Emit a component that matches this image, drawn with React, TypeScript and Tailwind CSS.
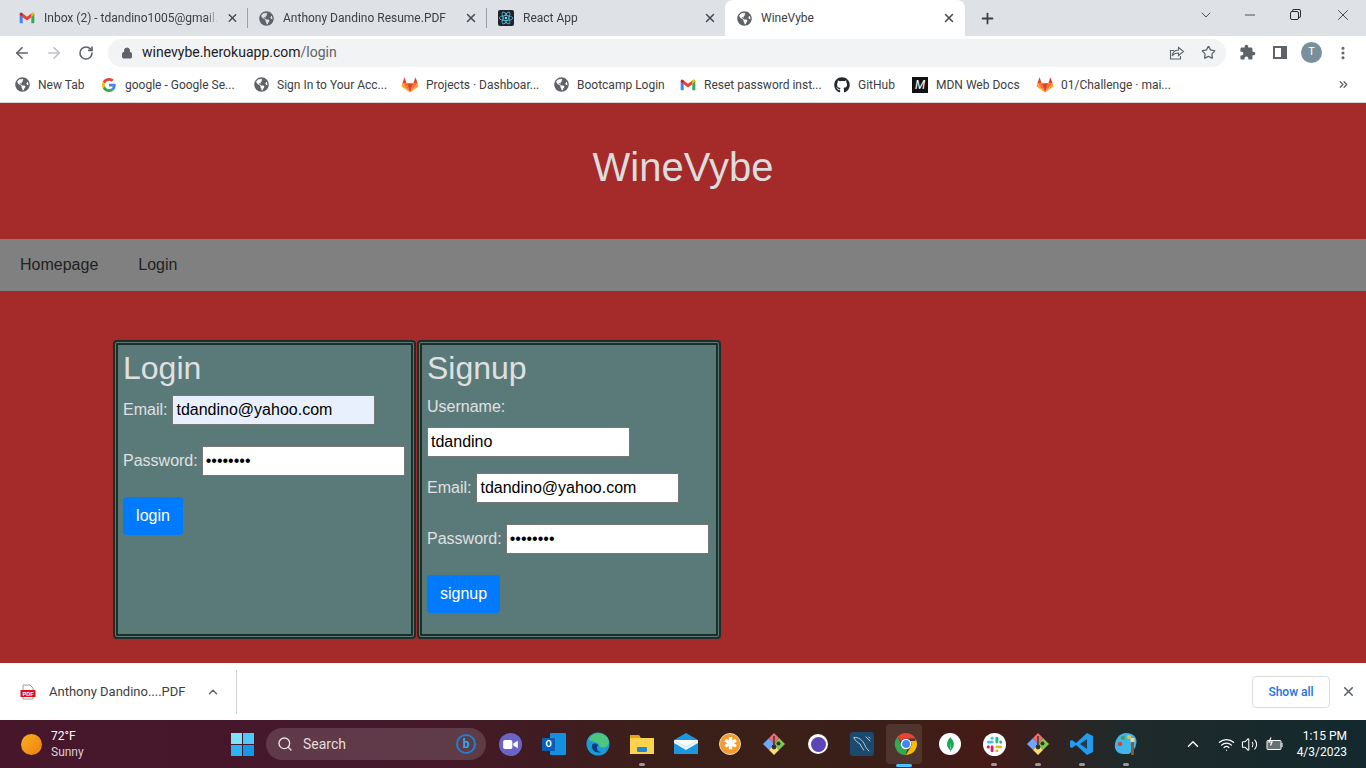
import type { ReactNode } from 'react';
import { ArrowLeft, ArrowRight, RotateCw, Lock, Star, MoreVertical, ChevronDown, ChevronUp, ChevronsRight, Minus, Plus, X, Search, Wifi, Volume2 } from 'lucide-react';
import { FaGlobeAmericas, FaGithub } from 'react-icons/fa';
import { SiReact, SiMongodb } from 'react-icons/si';

const GmailIcon = () => (
  <svg viewBox="0 0 24 24" className="w-4 h-4 shrink-0">
    <path d="M1 6.5C1 4.5 3 3.5 4.5 4.6L5.5 5.4V20H2.5C1.7 20 1 19.3 1 18.5Z" fill="#4285F4" />
    <path d="M23 6.5C23 4.5 21 3.5 19.5 4.6L18.5 5.4V20H21.5C22.3 20 23 19.3 23 18.5Z" fill="#34A853" />
    <path d="M5.5 5.4L12 10.3L18.5 5.4V11L12 15.9L5.5 11Z" fill="#EA4335" />
    <path d="M1 6.5L5.5 11V5.4L4.5 4.6C3 3.5 1 4.5 1 6.5Z" fill="#C5221F" />
    <path d="M23 6.5L18.5 11V5.4L19.5 4.6C21 3.5 23 4.5 23 6.5Z" fill="#FBBC04" />
  </svg>
);

const GoogleIcon = () => (
  <svg viewBox="0 0 48 48" className="w-[14px] h-[14px] shrink-0">
    <path fill="#EA4335" d="M24 9.5c3.54 0 6.71 1.22 9.21 3.6l6.85-6.85C35.9 2.38 30.47 0 24 0 14.62 0 6.51 5.38 2.56 13.22l7.98 6.19C12.43 13.72 17.74 9.5 24 9.5z" />
    <path fill="#4285F4" d="M46.98 24.55c0-1.57-.15-3.09-.38-4.55H24v9.02h12.94c-.58 2.96-2.26 5.48-4.78 7.18l7.73 6c4.51-4.18 7.09-10.36 7.09-17.65z" />
    <path fill="#FBBC05" d="M10.53 28.59c-.48-1.45-.76-2.99-.76-4.59s.27-3.14.76-4.59l-7.98-6.19C.92 16.46 0 20.12 0 24c0 3.88.92 7.54 2.56 10.78l7.97-6.19z" />
    <path fill="#34A853" d="M24 48c6.48 0 11.93-2.13 15.89-5.81l-7.73-6c-2.15 1.45-4.92 2.3-8.16 2.3-6.26 0-11.57-4.22-13.47-9.91l-7.98 6.19C6.51 42.62 14.62 48 24 48z" />
  </svg>
);

const GitlabIcon = () => (
  <svg viewBox="0 0 24 24" className="w-[18px] h-[18px] shrink-0">
    <polygon points="12,22 16.5,9.5 7.5,9.5" fill="#E24329" />
    <polygon points="12,22 7.5,9.5 1.8,9.5" fill="#FC6D26" />
    <polygon points="12,22 16.5,9.5 22.2,9.5" fill="#FC6D26" />
    <polygon points="1.8,9.5 0.8,14 12,22" fill="#FCA326" />
    <polygon points="22.2,9.5 23.2,14 12,22" fill="#FCA326" />
    <polygon points="1.8,9.5 4.8,1.5 7.5,9.5" fill="#E24329" />
    <polygon points="22.2,9.5 19.2,1.5 16.5,9.5" fill="#E24329" />
  </svg>
);

const Globe = () => <FaGlobeAmericas className="w-[15px] h-[15px] shrink-0 text-[#5f6368]" />;

const ReactFavicon = () => (
  <div className="w-4 h-4 shrink-0 bg-[#20232a] rounded-[2px] flex items-center justify-center">
    <SiReact className="w-[14px] h-[14px] text-[#61dafb]" />
  </div>
);

const MdnIcon = () => (
  <div className="w-4 h-4 shrink-0 bg-[#111111] flex items-center justify-center text-white text-[12px] leading-none italic">M</div>
);

function Tab({ icon, title, width, sep = true }: { icon: ReactNode; title: string; width: string; sep?: boolean }) {
  return (
    <div className={`${width} flex items-center pl-[11px] pr-[8px] shrink-0 ${sep ? 'border-r border-[#9aa0a6] h-[20px]' : 'h-[36px]'}`}>
      {icon}
      <span className="ml-[9px] flex-1 whitespace-nowrap text-[12px] text-[#3c4043] [mask-image:linear-gradient(to_left,transparent,black_12px)]">{title}</span>
      <X className="w-[14px] h-[14px] ml-2 text-[#45494d]" strokeWidth={2.5} />
    </div>
  );
}

function Bookmark({ icon, label, width }: { icon: ReactNode; label: string; width: string }) {
  return (
    <div className={`${width} flex items-center shrink-0`}>
      <div className="w-[16px] flex justify-center shrink-0">{icon}</div>
      <span className="ml-[8px] text-[12px] whitespace-nowrap text-[#3c4043]">{label}</span>
    </div>
  );
}

function TaskIcon({ children, dot, active }: { children: ReactNode; dot?: boolean; active?: boolean }) {
  return (
    <div className="relative w-[44px] h-[48px] flex items-center justify-center shrink-0">
      {active && <div className="absolute left-[2px] top-[4px] w-[36px] h-[40px] rounded-[4px] bg-white/10" />}
      <div className="relative">{children}</div>
      {dot && <div className="absolute bottom-[2px] left-[19px] w-[6px] h-[3px] rounded-full bg-[#9a9a9a]" />}
      {active && <div className="absolute bottom-[1px] left-[12px] w-[16px] h-[3px] rounded-full bg-[#4cc2ff]" />}
    </div>
  );
}

const DiamondApp = () => (
  <svg viewBox="0 0 24 24" className="w-6 h-6">
    <polygon points="1,12 7,6 12,12 7,18" fill="#6ea8fe" />
    <polygon points="12,12 17,6 23,12 17,18" fill="#7ec850" />
    <polygon points="7,18 12,12 17,18 12,23" fill="#f7dc6f" />
    <polygon points="7,6 12,1 17,6 12,12" fill="#f26d6d" />
    <path d="M12 4V15" stroke="#333" strokeWidth="1.4" />
    <circle cx="12" cy="15" r="2.4" fill="#333" />
    <circle cx="16.5" cy="11.5" r="2" fill="#333" />
  </svg>
);

const inputClass = 'w-[203px] h-[30px] self-start border border-[#767676] bg-white text-black text-[16px] px-[3px] outline-none font-["Liberation_Sans",sans-serif]';

function LoginForm() {
  return (
    <div className="w-[303px] h-[299px] shrink-0 rounded-[4px] border-[5px] border-double border-[#1b2e28] bg-[#5a7a7a] px-[5px] pt-[4px] text-[#e0e0e0]">
      <h2 className="text-[32px] leading-[38px] mb-[8px]">Login</h2>
      <div className="flex items-center h-[29px] text-[16px]">
        <label className="mr-[5px]">Email:</label>
        <input className={`${inputClass} !bg-[#e8f0fe]`} defaultValue="tdandino@yahoo.com" />
      </div>
      <div className="flex items-center h-[29px] mt-[22px] text-[16px]">
        <label className="mr-[4px]">Password:</label>
        <input type="password" className={inputClass} defaultValue="password" />
      </div>
      <button className="mt-[22px] w-[60px] h-[38px] rounded-[4px] bg-[#007bff] text-white text-[16px]">login</button>
    </div>
  );
}

function SignupForm() {
  return (
    <div className="w-[304px] h-[299px] shrink-0 rounded-[4px] border-[5px] border-double border-[#1b2e28] bg-[#5a7a7a] px-[5px] pt-[4px] text-[#e0e0e0]">
      <h2 className="text-[32px] leading-[38px] mb-[8px]">Signup</h2>
      <div className="h-[24px] text-[16px] leading-[24px]">Username:</div>
      <input className={`${inputClass} block mt-[8px]`} defaultValue="tdandino" />
      <div className="flex items-center h-[29px] mt-[16px] text-[16px]">
        <label className="mr-[5px]">Email:</label>
        <input className={inputClass} defaultValue="tdandino@yahoo.com" />
      </div>
      <div className="flex items-center h-[29px] mt-[22px] text-[16px]">
        <label className="mr-[4px]">Password:</label>
        <input type="password" className={inputClass} defaultValue="password" />
      </div>
      <button className="mt-[22px] w-[73px] h-[38px] rounded-[4px] bg-[#007bff] text-white text-[16px]">signup</button>
    </div>
  );
}

export default function App() {
  return (
    <div className="w-[1366px] h-[768px] overflow-hidden flex flex-col bg-white font-['Roboto',sans-serif]">
      {/* Tab strip */}
      <div className="h-[36px] bg-[#dee1e6] flex items-center pl-[8px] shrink-0">
        <div className="flex items-center">
          <Tab icon={<GmailIcon />} title="Inbox (2) - tdandino1005@gmail." width="w-[240px]" />
          <Tab icon={<Globe />} title="Anthony Dandino Resume.PDF" width="w-[239px]" />
          <Tab icon={<ReactFavicon />} title="React App" width="w-[238px]" sep={false} />
        </div>
        <div className="w-[240px] h-[36px] bg-white rounded-t-[8px] flex items-center pl-[12px] pr-[9px] shrink-0">
          <Globe />
          <span className="ml-[9px] flex-1 text-[12px] text-[#3c4043]">WineVybe</span>
          <X className="w-[14px] h-[14px] text-[#45494d]" strokeWidth={2.5} />
        </div>
        <Plus className="w-[17px] h-[17px] ml-[14px] text-[#3c4043]" strokeWidth={2.5} />
        <div className="ml-auto self-start pt-[6px] flex items-center text-[#2a2d30]">
          <ChevronDown className="w-[16px] h-[16px] mr-[28px]" strokeWidth={1.2} />
          <Minus className="w-[16px] h-[16px] mr-[32px]" strokeWidth={1.2} />
          <div className="w-[9px] h-[9px] mr-[35px] border border-[#2a2d30] rounded-[2px] bg-[#dee1e6] shadow-[2px_-2px_0_-1px_#dee1e6,2px_-2px_0_0_#2a2d30]" />
          <X className="w-[18px] h-[18px] mr-[14px]" strokeWidth={1.1} />
        </div>
      </div>

      {/* Toolbar */}
      <div className="h-[33px] flex items-center shrink-0 bg-white">
        <ArrowLeft className="w-[18px] h-[18px] ml-[13px] text-[#5f6368]" strokeWidth={2.2} />
        <ArrowRight className="w-[18px] h-[18px] ml-[14px] text-[#bdc1c6]" strokeWidth={2.2} />
        <RotateCw className="w-[16px] h-[16px] ml-[15px] text-[#5f6368]" strokeWidth={2.4} />
        <div className="w-[1118px] h-[28px] ml-[14px] rounded-full bg-[#f1f3f4] flex items-center pl-[13px] pr-[10px]">
          <Lock className="w-[12px] h-[12px] text-[#5f6368] fill-[#5f6368]" />
          <span className="ml-[9px] text-[14px] text-[#202124]">winevybe.herokuapp.com<span className="text-[#5f6368]">/login</span></span>
          <div className="ml-auto flex items-center gap-[16px]">
            <svg viewBox="0 0 16 16" className="w-[16px] h-[16px]" fill="none" stroke="#5f6368" strokeWidth="1.1">
              <path d="M9.5 2.5L14.5 6.5L9.5 10.5V8C6.5 8 4.5 9 3.2 11C3.5 7.5 5.5 5.3 9.5 5Z" />
              <path d="M11.5 11V14H1.5V5.5H5" />
            </svg>
            <Star className="w-[15px] h-[15px] text-[#5f6368]" strokeWidth={2} />
          </div>
        </div>
        <svg viewBox="0 0 24 24" className="w-[17px] h-[17px] ml-[13px]" fill="#5f6368">
          <path d="M20.5 11H19V7c0-1.1-.9-2-2-2h-4V3.5C13 2.12 11.88 1 10.5 1S8 2.12 8 3.5V5H4c-1.1 0-1.99.9-1.99 2v3.8H3.5c1.49 0 2.7 1.21 2.7 2.7s-1.21 2.7-2.7 2.7H2V20c0 1.1.9 2 2 2h3.8v-1.5c0-1.49 1.21-2.7 2.7-2.7 1.49 0 2.7 1.21 2.7 2.7V22H17c1.1 0 2-.9 2-2v-4h1.5c1.38 0 2.5-1.12 2.5-2.5S21.88 11 20.5 11z" />
        </svg>
        <div className="w-[14px] h-[13px] ml-[17px] border-2 border-[#5f6368] border-r-[6px]" />
        <div className="w-[21px] h-[21px] ml-[14px] rounded-full bg-[#78909c] flex items-center justify-center text-[11px] text-white">T</div>
        <MoreVertical className="w-[16px] h-[16px] ml-[13px] text-[#5f6368]" strokeWidth={2.6} />
      </div>

      {/* Bookmarks */}
      <div className="h-[34px] flex items-center pl-[14px] pb-[2px] shrink-0 border-b border-[#d0d3d8]">
        <Bookmark icon={<Globe />} label="New Tab" width="w-[87px]" />
        <Bookmark icon={<GoogleIcon />} label="google - Google Se..." width="w-[152px]" />
        <Bookmark icon={<Globe />} label="Sign In to Your Acc..." width="w-[149px]" />
        <Bookmark icon={<GitlabIcon />} label="Projects · Dashboar..." width="w-[151px]" />
        <Bookmark icon={<Globe />} label="Bootcamp Login" width="w-[127px]" />
        <Bookmark icon={<GmailIcon />} label="Reset password inst..." width="w-[154px]" />
        <Bookmark icon={<FaGithub className="w-4 h-4 text-[#24292e]" />} label="GitHub" width="w-[78px]" />
        <Bookmark icon={<MdnIcon />} label="MDN Web Docs" width="w-[125px]" />
        <Bookmark icon={<GitlabIcon />} label="01/Challenge · mai..." width="w-[300px]" />
        <ChevronsRight className="w-[13px] h-[13px] text-[#5f6368]" strokeWidth={2.4} />
      </div>

      {/* Page */}
      <div className="h-[560px] bg-[#a52a2a] shrink-0 font-['Liberation_Sans',sans-serif]">
        <header className="h-[136px] flex items-center justify-center text-[40px] text-[#dcdcdc] pb-[8px]">WineVybe</header>
        <nav className="h-[52px] bg-[#808080] flex items-center text-[16px] text-[#222222]">
          <a className="px-[20px]">Homepage</a>
          <a className="px-[20px]">Login</a>
        </nav>
        <main className="flex pl-[113px] pt-[49px] gap-[1px]">
          <LoginForm />
          <SignupForm />
        </main>
      </div>

      {/* Download bar */}
      <div className="h-[57px] bg-white flex items-center shrink-0">
        <svg viewBox="0 0 16 16" className="w-[16px] h-[16px] ml-[20px]">
          <path d="M3 1H10L13 4V15H3Z" fill="#fff" stroke="#9aa0a6" />
          <rect x="0.5" y="6" width="15" height="7" fill="#d8121b" />
          <text x="8" y="11.5" textAnchor="middle" fontSize="5.5" fontWeight="700" fill="#fff" fontFamily="Liberation Sans">PDF</text>
        </svg>
        <span className="ml-[13px] text-[13px] text-[#3c4043] w-[142px] whitespace-nowrap">Anthony Dandino....PDF</span>
        <ChevronUp className="w-[14px] h-[14px] ml-[15px] text-[#5f6368]" strokeWidth={2.5} />
        <div className="w-px h-[44px] bg-[#d0d3d8] ml-[16px]" />
        <div className="ml-auto w-[78px] h-[32px] mr-[11px] rounded-[4px] border border-[#dadce0] flex items-center justify-center text-[12px] font-medium text-[#1a73e8]">Show all</div>
        <X className="w-[15px] h-[15px] mr-[10px] text-[#5f6368]" strokeWidth={2.5} />
      </div>

      {/* Taskbar */}
      <div className="h-[48px] flex items-center shrink-0 bg-[linear-gradient(90deg,#47162a_0%,#45182a_30%,#3a2018_50%,#3a1f18_65%,#451a17_72%,#1f2a2a_82%,#13292f_100%)] text-white">
        <div className="w-[21px] h-[21px] ml-[21px] shrink-0 rounded-full bg-gradient-to-br from-[#f6b21e] to-[#ef7d12]" />
        <div className="ml-[9px] w-[169px] shrink-0 text-[12px] leading-[16px]">
          <div>72°F</div>
          <div className="text-[#d8d0d4]">Sunny</div>
        </div>
        <TaskIcon>
          <div className="grid grid-cols-2 gap-[1px] w-[23px] h-[23px]">
            <div className="bg-[#7fe3fd]" />
            <div className="bg-[#4dc8f8]" />
            <div className="bg-[#2bb5f5]" />
            <div className="bg-[#1499ea]" />
          </div>
        </TaskIcon>
        <div className="w-[220px] h-[32px] shrink-0 rounded-full bg-white/15 flex items-center pl-[11px] pr-[10px] text-[14px] text-[#e4dcde] ml-[2px]">
          <Search className="w-[16px] h-[16px] text-[#e8e8e8]" />
          <span className="ml-[10px]">Search</span>
          <div className="ml-auto w-[20px] h-[20px] rounded-full border-2 border-[#1f7fd0] flex items-center justify-center text-[12px] font-bold text-[#35a7f0] leading-none">b</div>
        </div>
        <div className="w-[2px] shrink-0" />
        <TaskIcon>
          <div className="w-[23px] h-[23px] rounded-full bg-[#6c63c7] flex items-center justify-center">
            <svg viewBox="0 0 16 12" className="w-[15px] h-[11px]">
              <rect x="0" y="1" width="10" height="10" rx="2" fill="#fff" />
              <path d="M11 5L16 2V10L11 7Z" fill="#fff" />
            </svg>
          </div>
        </TaskIcon>
        <TaskIcon>
          <div className="relative w-[24px] h-[22px]">
            <div className="absolute right-0 top-0 w-[16px] h-[22px] bg-[#1490df] rounded-[1px]" />
            <div className="absolute left-0 top-[5px] w-[13px] h-[13px] bg-[#0a5fb4] rounded-[1px] flex items-center justify-center text-[9px] font-bold leading-none">O</div>
          </div>
        </TaskIcon>
        <TaskIcon>
          <svg viewBox="0 0 24 24" className="w-6 h-6">
            <circle cx="12" cy="12" r="11.5" fill="#1d9bd8" />
            <path d="M3 7C6 1 14 -1 20 4C24 8 23.5 13 20 15C17 16.5 12 15 13 12C9 9 4 10 3 7Z" fill="#4ec77d" />
            <path d="M6 13C5 18 10 22 15 20C11 20 10 16 12 13C10 11 7 11 6 13Z" fill="#0c3f80" />
          </svg>
        </TaskIcon>
        <TaskIcon dot>
          <svg viewBox="0 0 24 24" className="w-6 h-6">
            <path d="M0 3H9L11 6H24V22H0Z" fill="#e9a60c" />
            <rect y="6" width="24" height="16" fill="#fcd34d" />
            <rect x="7" y="15" width="10" height="5" rx="1" fill="#1e88d4" />
          </svg>
        </TaskIcon>
        <TaskIcon>
          <svg viewBox="0 0 24 24" className="w-6 h-6">
            <path d="M0 8L12 1L24 8V22H0Z" fill="#1a97e0" />
            <path d="M0 8L12 15L24 8V11L12 18L0 11Z" fill="#e8f4fc" />
            <path d="M0 8H24L12 15Z" fill="#ffffff" />
          </svg>
        </TaskIcon>
        <TaskIcon>
          <div className="w-[22px] h-[22px] rounded-full bg-[#f49a2e] border border-[#e8d8c0] flex items-center justify-center text-white text-[16px] leading-none font-bold">✱</div>
        </TaskIcon>
        <TaskIcon><DiamondApp /></TaskIcon>
        <TaskIcon>
          <div className="w-[20px] h-[20px] rounded-full bg-white flex items-center justify-center">
            <div className="w-[15px] h-[15px] rounded-full bg-[#5b45b8] ml-[1px] mt-[1px]" />
          </div>
        </TaskIcon>
        <TaskIcon>
          <div className="w-[24px] h-[24px] rounded-[3px] bg-[#1c4a6e] flex items-center justify-center">
            <svg viewBox="0 0 24 24" className="w-[22px] h-[22px]" fill="none" stroke="#c8d6e0" strokeWidth="1">
              <path d="M3 5C8 4 13 8 15 13C16 16 18 18 20 20" />
              <path d="M3 5C5 9 8 11 10 12C11 15 13 17 14 19" />
              <path d="M16 4L21 9M19 4L21 6" />
            </svg>
          </div>
        </TaskIcon>
        <TaskIcon active>
          <svg viewBox="0 0 24 24" className="w-6 h-6">
            <path d="M12 1A11 11 0 0 1 21.5 6.5H12A5.5 5.5 0 0 0 7 9.5L3.5 4.8A11 11 0 0 1 12 1Z" fill="#EA4335" />
            <path d="M21.5 6.5A11 11 0 0 1 12 23L16.8 14.7A5.5 5.5 0 0 0 16.5 9H21.5Z" fill="#FBBC04" />
            <path d="M12 23A11 11 0 0 1 3.5 4.8L7.3 12.5A5.5 5.5 0 0 0 13 17.4Z" fill="#34A853" />
            <circle cx="12" cy="12" r="4.6" fill="#4285F4" stroke="#fff" strokeWidth="1.2" />
          </svg>
        </TaskIcon>
        <TaskIcon>
          <div className="w-[22px] h-[22px] rounded-full bg-white flex items-center justify-center">
            <SiMongodb className="w-[15px] h-[15px] text-[#13aa52]" />
          </div>
        </TaskIcon>
        <TaskIcon dot>
          <svg viewBox="0 0 24 24" className="w-[23px] h-[23px]">
            <circle cx="12" cy="12" r="12" fill="#fff" />
            <rect x="4" y="8" width="7" height="3" rx="1.5" fill="#36c5f0" />
            <circle cx="9.5" cy="5.5" r="1.6" fill="#36c5f0" />
            <rect x="13" y="4" width="3" height="7" rx="1.5" fill="#2eb67d" />
            <circle cx="18.5" cy="9.5" r="1.6" fill="#2eb67d" />
            <rect x="13" y="13" width="7" height="3" rx="1.5" fill="#ecb22e" />
            <circle cx="14.5" cy="18.5" r="1.6" fill="#ecb22e" />
            <rect x="8" y="13" width="3" height="7" rx="1.5" fill="#e01e5a" />
            <circle cx="5.5" cy="14.5" r="1.6" fill="#e01e5a" />
          </svg>
        </TaskIcon>
        <TaskIcon dot><DiamondApp /></TaskIcon>
        <TaskIcon dot>
          <svg viewBox="0 0 24 24" className="w-6 h-6">
            <path d="M17 1L23 4V20L17 23L6 13L2 16L0 15V9L2 8L6 11Z" fill="#1f9cf0" />
            <path d="M17 7V17L10 12Z" fill="#2b2b2b" opacity="0.85" />
          </svg>
        </TaskIcon>
        <TaskIcon dot>
          <svg viewBox="0 0 24 24" className="w-6 h-6">
            <path d="M12 1C20 1 24 6 22 13C21 18 17 20 15 22H9C4 22 0 18 1 12C2 6 6 1 12 1Z" fill="#3fb5e8" />
            <circle cx="6" cy="12" r="2.2" fill="#d8452e" />
            <circle cx="9" cy="6" r="2" fill="#3fa34d" />
            <circle cx="15" cy="5" r="2" fill="#f4c430" />
            <rect x="17" y="9" width="3" height="14" fill="#8a5a2b" />
            <rect x="16.5" y="6" width="4" height="4" fill="#e8d8b0" />
          </svg>
        </TaskIcon>
        <ChevronUp className="w-[18px] h-[18px] ml-[36px] shrink-0" strokeWidth={2} />
        <Wifi className="w-[17px] h-[17px] ml-[16px] shrink-0" strokeWidth={1.8} />
        <Volume2 className="w-[17px] h-[17px] ml-[6px] shrink-0" strokeWidth={1.5} />
        <svg viewBox="0 0 18 14" className="w-[18px] h-[14px] ml-[8px] shrink-0" fill="none" stroke="#fff" strokeWidth="1">
          <rect x="1" y="3.5" width="14" height="9" rx="1" fill="#ffffff55" />
          <path d="M16 6V10" />
          <path d="M5 0.5L3 5H6L4.5 8.5" strokeWidth="1.2" />
        </svg>
        <div className="ml-auto mr-[19px] text-right text-[12px] leading-[16px]">
          <div>1:15 PM</div>
          <div>4/3/2023</div>
        </div>
      </div>
    </div>
  );
}
